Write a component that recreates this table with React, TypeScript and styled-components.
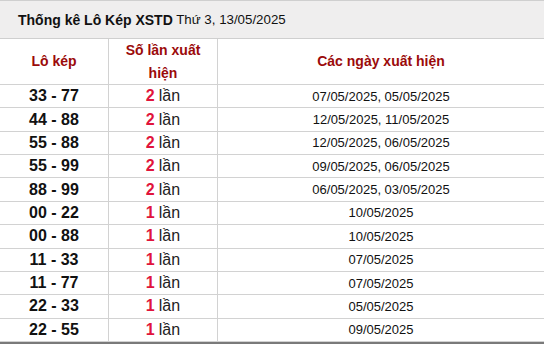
import React from "react";
import styled, { createGlobalStyle } from "styled-components";

const GlobalStyle = createGlobalStyle`
  html, body {
    margin: 0;
    padding: 0;
    background: #ffffff;
    font-family: "Liberation Sans", Arial, sans-serif;
  }
`;

const Wrapper = styled.div`
  width: 544px;
  border-bottom: 2px solid #7a7a7a;
`;

const TitleBar = styled.div`
  height: 37px;
  display: flex;
  align-items: center;
  padding-left: 18px;
  background-color: #efeeee;
  border-top: 1px solid #cfcfcf;
  border-bottom: 1px solid #cfcfcf;
  font-size: 13.3px;
  color: #111;
  white-space: pre;
`;

const TitleStrong = styled.b`
  font-size: 14px;
  font-weight: 700;
`;

const Grid = styled.div`
  display: grid;
  grid-template-columns: 109px 109px 1fr;
`;

const Cell = styled.div<{ $last?: boolean; $head?: boolean }>`
  height: ${(p) => (p.$head ? "45px" : "22.36px")};
  display: flex;
  align-items: center;
  justify-content: center;
  text-align: center;
  border-bottom: 1px solid #d2d2d2;
  border-right: ${(p) => (p.$last ? "none" : "1px solid #d2d2d2")};
  overflow: hidden;
`;

const HeadText = styled.span`
  font-size: 14px;
  font-weight: 700;
  line-height: 22.5px;
  color: #9b0a0a;
`;

const Pair = styled.span`
  font-size: 16px;
  font-weight: 700;
  color: #111;
`;

const Count = styled.span`
  font-size: 16px;
  color: #222;
`;

const CountNum = styled.b`
  color: #e0143c;
  margin-right: 4px;
`;

const Dates = styled.span`
  font-size: 13px;
  color: #111;
`;

const rows: [string, number, string][] = [
  ["33 - 77", 2, "07/05/2025, 05/05/2025"],
  ["44 - 88", 2, "12/05/2025, 11/05/2025"],
  ["55 - 88", 2, "12/05/2025, 06/05/2025"],
  ["55 - 99", 2, "09/05/2025, 06/05/2025"],
  ["88 - 99", 2, "06/05/2025, 03/05/2025"],
  ["00 - 22", 1, "10/05/2025"],
  ["00 - 88", 1, "10/05/2025"],
  ["11 - 33", 1, "07/05/2025"],
  ["11 - 77", 1, "07/05/2025"],
  ["22 - 33", 1, "05/05/2025"],
  ["22 - 55", 1, "09/05/2025"],
];

const App = () => {
  return (
    <>
      <GlobalStyle />
      <Wrapper>
        <TitleBar>
          <TitleStrong>Thống kê Lô Kép XSTD</TitleStrong> Thứ 3, 13/05/2025
        </TitleBar>
        <Grid>
          <Cell $head>
            <HeadText>Lô kép</HeadText>
          </Cell>
          <Cell $head>
            <HeadText>
              Số lần xuất
              <br />
              hiện
            </HeadText>
          </Cell>
          <Cell $head $last>
            <HeadText>Các ngày xuất hiện</HeadText>
          </Cell>
          {rows.map(([pair, count, dates]) => (
            <React.Fragment key={pair}>
              <Cell>
                <Pair>{pair}</Pair>
              </Cell>
              <Cell>
                <Count>
                  <CountNum>{count}</CountNum>lần
                </Count>
              </Cell>
              <Cell $last>
                <Dates>{dates}</Dates>
              </Cell>
            </React.Fragment>
          ))}
        </Grid>
      </Wrapper>
    </>
  );
};

export default App;
